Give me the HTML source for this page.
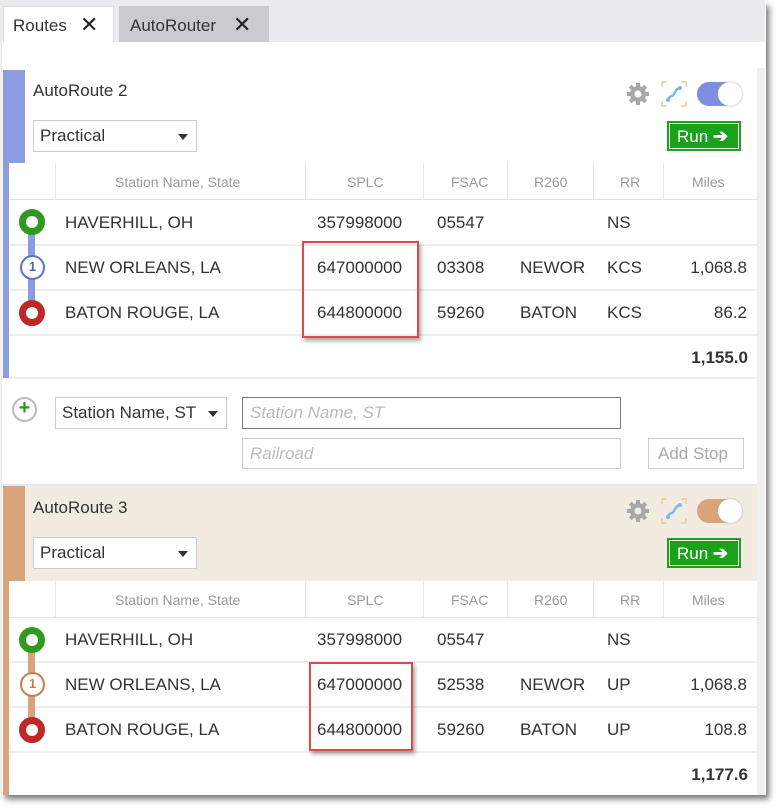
<!DOCTYPE html>
<html><head><style>
*{box-sizing:border-box;margin:0;padding:0}
body{width:780px;height:811px;background:#fff;position:relative;font-family:"Liberation Sans",sans-serif;color:#333;overflow:hidden}
.a{position:absolute}
.t{font-size:17px;white-space:nowrap}
.h{font-size:14px;color:#999;white-space:nowrap}
.sel{position:absolute;background:#fff;border:1px solid #ccc;font-size:17px;padding:5px 0 0 6px;color:#333}
.sel:after{content:"";position:absolute;right:8px;top:13px;border-left:5px solid transparent;border-right:5px solid transparent;border-top:6px solid #333}
.run{position:absolute;background:#1aa31a;border:2px solid #1aa31a;outline:1px solid #fff;outline-offset:-3px;color:#fff;font-size:17px;padding:3px 0 0 8px}
.run b{font-size:18px}
.vl{position:absolute;width:1px;background:#e8e8e8}
.hl{position:absolute;height:2px;background:#eeeeee}
.red{position:absolute;border:2px solid #e04848;box-shadow:2px 3px 4px rgba(0,0,0,.35)}
</style></head><body>
<div class="a" style="left:2px;top:2px;width:764px;height:793px;box-shadow:3px 4px 6px rgba(0,0,0,.55);background:#fff"></div>
<div class="a" style="left:0;top:0;width:765px;height:42px;background:#e9ebee"></div>
<div class="a" style="left:3px;top:6px;width:111px;height:36px;background:#fff;border:1px solid #ddd;border-bottom:none"></div>
<div class="a t" style="left:13px;top:16px">Routes</div>
<div class="a" style="left:80px;top:12px;font-size:22px;color:#222">✕</div>
<div class="a" style="left:119px;top:6px;width:150px;height:36px;background:#c9cbce"></div>
<div class="a t" style="left:130px;top:16px">AutoRouter</div>
<div class="a" style="left:233px;top:12px;font-size:22px;color:#222">✕</div>
<div class="a" style="left:757px;top:68px;width:8px;height:727px;background:#f0f0f0"></div>

<div class="a" style="left:3px;top:70px;width:22px;height:93px;background:#8c9ce0"></div>
<div class="a" style="left:3px;top:163px;width:6px;height:215px;background:#8c9ce0"></div>
<div class="a t" style="left:33px;top:81px">AutoRoute 2</div>
<div class="sel" style="left:33px;top:120px;width:164px;height:32px">Practical</div>
<svg class="a" style="left:626px;top:82px" width="24" height="24" viewBox="0 0 24 24"><g fill="#a8a8a8"><circle cx="12" cy="12" r="8"/><rect x="10" y="1" width="4" height="22"/><rect x="1" y="10" width="22" height="4"/><rect x="10" y="1" width="4" height="22" transform="rotate(45 12 12)"/><rect x="10" y="1" width="4" height="22" transform="rotate(-45 12 12)"/></g><circle cx="12" cy="12" r="3.5" fill="#fff"/></svg>
<svg class="a" style="left:661px;top:81px" width="26" height="26" viewBox="0 0 26 26"><path d="M1 6V1h5M20 1h5v5M25 20v5h-5M6 25H1v-5" stroke="#e2cfa0" fill="none" stroke-width="1.5"/><path d="M7 19c2-6 4-2 6-6s4-6 6-6" stroke="#7cb8e8" fill="none" stroke-width="2.5"/><circle cx="7" cy="19" r="2" fill="#7cb8e8"/><circle cx="19" cy="7" r="2" fill="#7cb8e8"/></svg>
<div class="a" style="left:697px;top:82px;width:45px;height:24px;border-radius:12px;background:#7c8fe0"></div>
<div class="a" style="left:718px;top:82px;width:24px;height:24px;border-radius:12px;background:#fff;box-shadow:0 0 2px #aaa"></div>
<div class="run" style="left:667px;top:121px;width:74px;height:30px">Run <b>➔</b></div>

<div class="hl" style="left:9px;top:199px;width:748px;height:1px;background:#e4e4e4"></div>
<div class="vl" style="left:55px;top:163px;height:36px"></div>
<div class="vl" style="left:305px;top:163px;height:36px"></div>
<div class="vl" style="left:423px;top:163px;height:36px"></div>
<div class="vl" style="left:507px;top:163px;height:36px"></div>
<div class="vl" style="left:593px;top:163px;height:36px"></div>
<div class="vl" style="left:663px;top:163px;height:36px"></div>
<div class="a h" style="left:115px;top:174px">Station Name, State</div>
<div class="a h" style="left:347px;top:174px">SPLC</div>
<div class="a h" style="left:451px;top:174px">FSAC</div>
<div class="a h" style="left:534px;top:174px">R260</div>
<div class="a h" style="left:620px;top:174px">RR</div>
<div class="a h" style="left:692px;top:174px">Miles</div>
<div class="hl" style="left:9px;top:244px;width:748px"></div>
<div class="hl" style="left:9px;top:289px;width:748px"></div>
<div class="hl" style="left:9px;top:334px;width:748px"></div>
<div class="hl" style="left:9px;top:377px;width:748px"></div>
<div class="a" style="left:28px;top:222px;width:7px;height:90px;background:#8c9ce0"></div>
<div class="a" style="left:19px;top:209px;width:26px;height:26px;border-radius:50%;border:7px solid #2e9b1e;background:#fff"></div>
<div class="a" style="left:20px;top:255px;width:25px;height:25px;border-radius:50%;border:2.5px solid #5a74d8;background:#fff;color:#4a64c8;font-size:13px;font-weight:bold;text-align:center;line-height:20px">1</div>
<div class="a" style="left:19px;top:300px;width:26px;height:26px;border-radius:50%;border:7px solid #c02828;background:#fff"></div>
<div class="a t" style="left:65px;top:213px">HAVERHILL, OH</div><div class="a t" style="left:317px;top:213px">357998000</div><div class="a t" style="left:437px;top:213px">05547</div><div class="a t" style="left:607px;top:213px">NS</div>
<div class="a t" style="left:65px;top:258px">NEW ORLEANS, LA</div><div class="a t" style="left:317px;top:258px">647000000</div><div class="a t" style="left:437px;top:258px">03308</div><div class="a t" style="left:520px;top:258px">NEWOR</div><div class="a t" style="left:607px;top:258px">KCS</div><div class="a t" style="left:647px;top:258px;width:100px;text-align:right">1,068.8</div>
<div class="a t" style="left:65px;top:303px">BATON ROUGE, LA</div><div class="a t" style="left:317px;top:303px">644800000</div><div class="a t" style="left:437px;top:303px">59260</div><div class="a t" style="left:520px;top:303px">BATON</div><div class="a t" style="left:607px;top:303px">KCS</div><div class="a t" style="left:647px;top:303px;width:100px;text-align:right">86.2</div>
<div class="a t" style="left:647px;top:348px;width:101px;text-align:right;font-weight:bold">1,155.0</div>
<div class="red" style="left:302px;top:241px;width:117px;height:97px"></div>

<div class="a" style="left:12px;top:397px;width:25px;height:25px;border-radius:50%;border:2.5px solid #bbb;color:#2a9a1a;font-size:20px;font-weight:bold;text-align:center;line-height:19px">+</div>
<div class="sel" style="left:55px;top:397px;width:172px;height:32px">Station Name, ST</div>
<div class="a" style="left:242px;top:397px;width:379px;height:32px;border:1px solid #777;font-size:17px;font-style:italic;color:#bbb;padding:5px 0 0 7px">Station Name, ST</div>
<div class="a" style="left:242px;top:438px;width:379px;height:31px;border:1px solid #ccc;font-size:17px;font-style:italic;color:#bbb;padding:5px 0 0 7px">Railroad</div>
<div class="a" style="left:648px;top:438px;width:96px;height:31px;border:1px solid #ccc;font-size:17px;color:#aaa;padding:5px 0 0 9px">Add Stop</div>

<div class="a" style="left:3px;top:484px;width:754px;height:2px;background:#e8e8e8"></div>
<div class="a" style="left:3px;top:486px;width:754px;height:95px;background:#f2ebe1"></div>
<div class="a" style="left:3px;top:486px;width:22px;height:95px;background:#d9a47c"></div>
<div class="a" style="left:3px;top:581px;width:6px;height:214px;background:#d9a47c"></div>
<div class="a t" style="left:33px;top:498px">AutoRoute 3</div>
<div class="sel" style="left:33px;top:537px;width:164px;height:32px">Practical</div>
<svg class="a" style="left:626px;top:499px" width="24" height="24" viewBox="0 0 24 24"><g fill="#a8a8a8"><circle cx="12" cy="12" r="8"/><rect x="10" y="1" width="4" height="22"/><rect x="1" y="10" width="22" height="4"/><rect x="10" y="1" width="4" height="22" transform="rotate(45 12 12)"/><rect x="10" y="1" width="4" height="22" transform="rotate(-45 12 12)"/></g><circle cx="12" cy="12" r="3.5" fill="#f2ebe1"/></svg>
<svg class="a" style="left:661px;top:498px" width="26" height="26" viewBox="0 0 26 26"><path d="M1 6V1h5M20 1h5v5M25 20v5h-5M6 25H1v-5" stroke="#e2cfa0" fill="none" stroke-width="1.5"/><path d="M7 19c2-6 4-2 6-6s4-6 6-6" stroke="#7cb8e8" fill="none" stroke-width="2.5"/><circle cx="7" cy="19" r="2" fill="#7cb8e8"/><circle cx="19" cy="7" r="2" fill="#7cb8e8"/></svg>
<div class="a" style="left:697px;top:499px;width:45px;height:24px;border-radius:12px;background:#d9a47c"></div>
<div class="a" style="left:718px;top:499px;width:24px;height:24px;border-radius:12px;background:#fff;box-shadow:0 0 2px #aaa"></div>
<div class="run" style="left:667px;top:538px;width:74px;height:30px">Run <b>➔</b></div>

<div class="hl" style="left:9px;top:617px;width:748px;height:1px;background:#e4e4e4"></div>
<div class="vl" style="left:55px;top:581px;height:36px"></div>
<div class="vl" style="left:305px;top:581px;height:36px"></div>
<div class="vl" style="left:423px;top:581px;height:36px"></div>
<div class="vl" style="left:507px;top:581px;height:36px"></div>
<div class="vl" style="left:593px;top:581px;height:36px"></div>
<div class="vl" style="left:663px;top:581px;height:36px"></div>
<div class="a h" style="left:115px;top:592px">Station Name, State</div>
<div class="a h" style="left:347px;top:592px">SPLC</div>
<div class="a h" style="left:451px;top:592px">FSAC</div>
<div class="a h" style="left:534px;top:592px">R260</div>
<div class="a h" style="left:620px;top:592px">RR</div>
<div class="a h" style="left:692px;top:592px">Miles</div>
<div class="hl" style="left:9px;top:661px;width:748px"></div>
<div class="hl" style="left:9px;top:706px;width:748px"></div>
<div class="hl" style="left:9px;top:751px;width:748px"></div>
<div class="a" style="left:28px;top:640px;width:7px;height:90px;background:#d9a47c"></div>
<div class="a" style="left:19px;top:627px;width:26px;height:26px;border-radius:50%;border:7px solid #2e9b1e;background:#fff"></div>
<div class="a" style="left:20px;top:672px;width:25px;height:25px;border-radius:50%;border:2.5px solid #c8804a;background:#fff;color:#c8804a;font-size:13px;font-weight:bold;text-align:center;line-height:20px">1</div>
<div class="a" style="left:19px;top:717px;width:26px;height:26px;border-radius:50%;border:7px solid #c02828;background:#fff"></div>
<div class="a t" style="left:65px;top:630px">HAVERHILL, OH</div><div class="a t" style="left:317px;top:630px">357998000</div><div class="a t" style="left:437px;top:630px">05547</div><div class="a t" style="left:607px;top:630px">NS</div>
<div class="a t" style="left:65px;top:675px">NEW ORLEANS, LA</div><div class="a t" style="left:317px;top:675px">647000000</div><div class="a t" style="left:437px;top:675px">52538</div><div class="a t" style="left:520px;top:675px">NEWOR</div><div class="a t" style="left:607px;top:675px">UP</div><div class="a t" style="left:647px;top:675px;width:100px;text-align:right">1,068.8</div>
<div class="a t" style="left:65px;top:720px">BATON ROUGE, LA</div><div class="a t" style="left:317px;top:720px">644800000</div><div class="a t" style="left:437px;top:720px">59260</div><div class="a t" style="left:520px;top:720px">BATON</div><div class="a t" style="left:607px;top:720px">UP</div><div class="a t" style="left:647px;top:720px;width:100px;text-align:right">108.8</div>
<div class="a t" style="left:647px;top:765px;width:101px;text-align:right;font-weight:bold">1,177.6</div>
<div class="red" style="left:309px;top:662px;width:104px;height:89px"></div>
</body></html>
